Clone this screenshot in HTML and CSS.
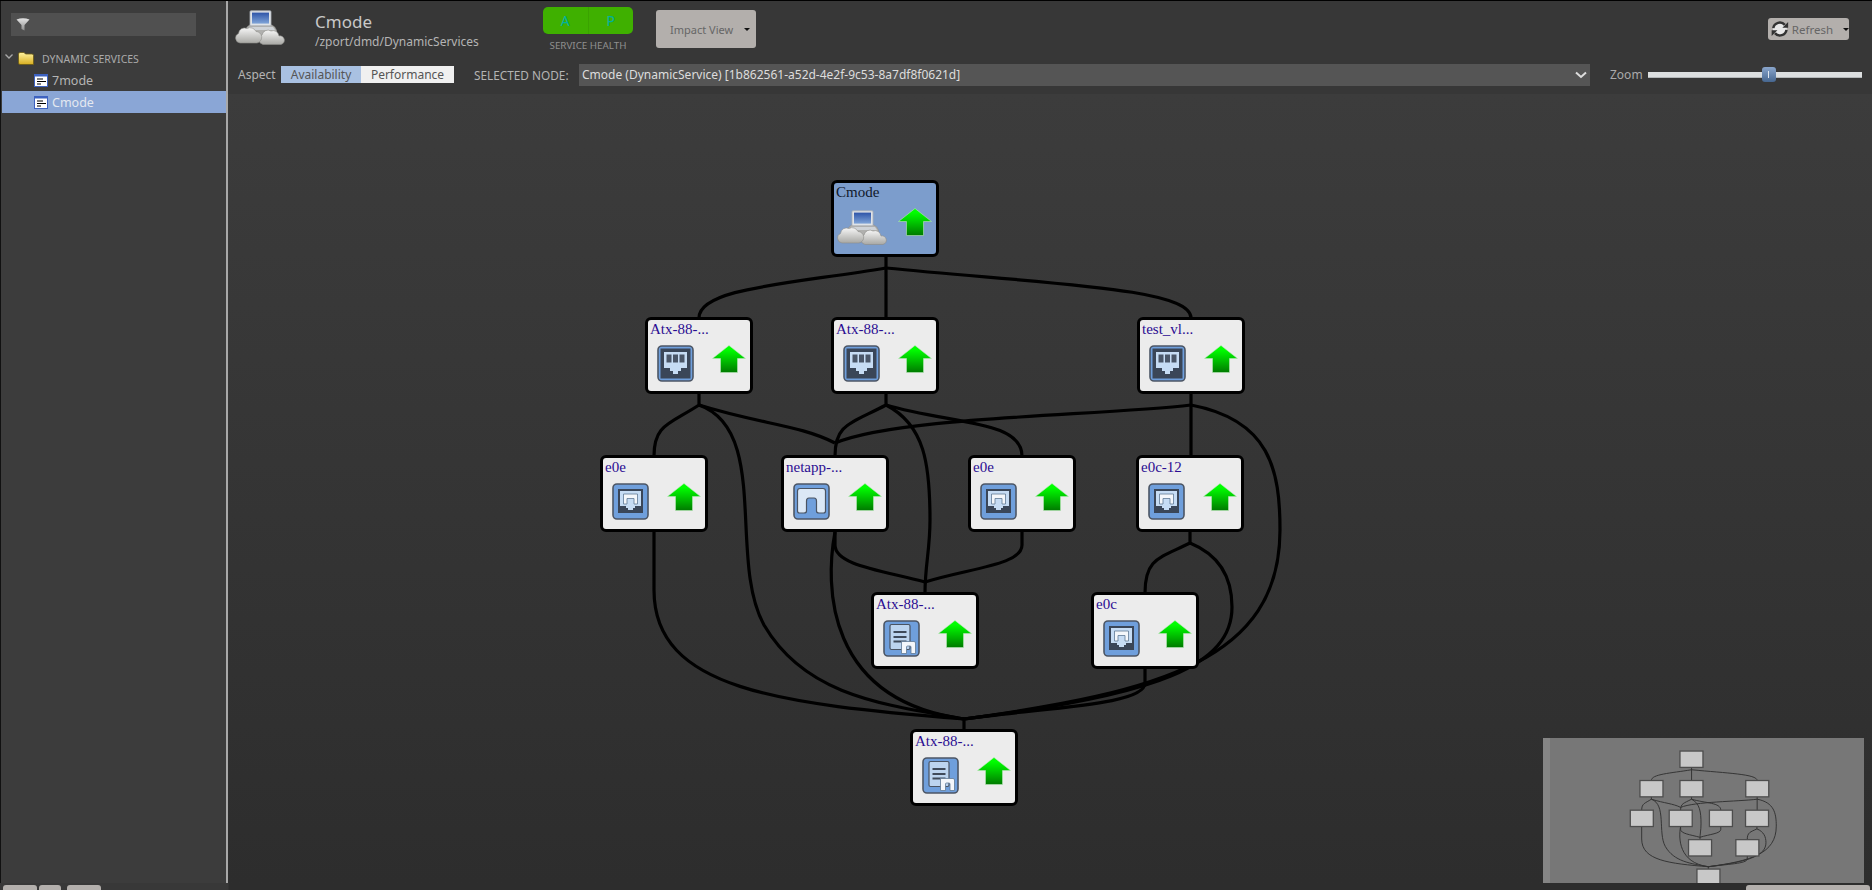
FILE: index.html
```html
<!DOCTYPE html>
<html lang="en">
<head>
  <meta charset="UTF-8">
  <title>Cmode - Dynamic Services</title>
  <link rel="stylesheet" href="styles.css">
</head>
<body>

  <!-- shared icons -->
  <svg class="defs" aria-hidden="true">
    <defs>
      <linearGradient id="g-arrow" x1="0" y1="0" x2="0" y2="1">
        <stop offset="0.15" stop-color="#00ff00"/>
        <stop offset="1" stop-color="#007a00"/>
      </linearGradient>
      <linearGradient id="g-screen" x1="0" y1="0" x2="0" y2="1">
        <stop offset="0" stop-color="#2f55a8"/>
        <stop offset="1" stop-color="#7fa4d8"/>
      </linearGradient>
      <linearGradient id="g-cloud" x1="0" y1="0" x2="0" y2="1">
        <stop offset="0" stop-color="#f6f6f6"/>
        <stop offset="1" stop-color="#a8a8a4"/>
      </linearGradient>
      <linearGradient id="g-folder" x1="0" y1="0" x2="0" y2="1">
        <stop offset="0" stop-color="#fff3a0"/>
        <stop offset="1" stop-color="#d8ae20"/>
      </linearGradient>
      <linearGradient id="g-funnel" x1="0" y1="0" x2="0" y2="1">
        <stop offset="0" stop-color="#e4e4e4"/>
        <stop offset="1" stop-color="#8c8c8c"/>
      </linearGradient>

      <symbol id="i-up" viewBox="0 0 34 28">
        <path d="M17 0.5 L33.5 13.5 H25.5 V27.5 H8.5 V13.5 H0.5 Z" fill="url(#g-arrow)" stroke="#b9e8b9" stroke-width="0.6"/>
      </symbol>

      <symbol id="i-cloud" viewBox="0 0 50 35">
        <path d="M10 24 q0-9 8-10 h15 q9 1 9 10 v6 H14 Z" fill="#b0b0ae" stroke="#8d8d8a" stroke-width="0.5"/>
        <rect x="15" y="0.8" width="21" height="15" rx="1" fill="#dfe3e8" stroke="#a9aeb6" stroke-width="0.8"/>
        <rect x="17" y="2.6" width="17" height="11" fill="url(#g-screen)"/>
        <path d="M14 17 h24 l2 3 H14 Z" fill="#cfd3d8"/>
        <g fill="url(#g-cloud)" stroke="#8d8d8a" stroke-width="0.6">
          <path d="M28 34.500 A5 5 0 0 1 27 25 A6 6 0 0 1 36 21 A6 6 0 0 1 44 26 A4.200 4.200 0 0 1 46 34.500 Z"/>
          <path d="M5 33 A5 5 0 0 1 3.500 23.500 A6 6 0 0 1 12 18.500 A6.500 6.500 0 0 1 21 21.500 A5.800 5.800 0 0 1 22 33 Z"/>
        </g>
      </symbol>

      <symbol id="i-port" viewBox="0 0 37 37">
        <rect x="1" y="1" width="35" height="35" rx="4" fill="#6f9fdc" stroke="#4c5665" stroke-width="1.600"/>
        <rect x="3.500" y="3.500" width="30" height="30" fill="#3a4658"/>
        <path d="M7 7 H30 V23 H24 V26 H21 V29 H16 V26 H13 V23 H7 Z" fill="#c6dcf4"/>
        <path d="M9.500 9.500 h5 v8 h-5 Z M16 9.500 h5 v8 h-5 Z M22.500 9.500 h5 v8 h-5 Z" fill="#4a5668"/>
      </symbol>

      <symbol id="i-iface" viewBox="0 0 37 37">
        <rect x="1" y="1" width="35" height="35" rx="4" fill="#6f9fdc" stroke="#4c5665" stroke-width="1.600"/>
        <rect x="6" y="6" width="25" height="24" fill="#3a4658"/>
        <path d="M8 8 H29 V23 H23 V25 H21 V27 H16 V25 H14 V23 H8 Z" fill="#c6dcf4"/>
        <path d="M11.500 11 H25.500 V21 H22 V15.500 H15 V21 H11.500 Z" fill="#f4f7fb" stroke="#5f7894" stroke-width="0.800"/>
      </symbol>

      <symbol id="i-netapp" viewBox="0 0 37 37">
        <rect x="1" y="1" width="35" height="35" rx="4" fill="#6f9fdc" stroke="#4c5665" stroke-width="1.600"/>
        <path d="M7 5.500 H30 Q32.500 5.500 32.500 8 V28 Q32.500 30 30.500 30 H26 Q23.500 30 23.500 28 V18 Q23.500 15 21 15 H16 Q13.500 15 13.500 18 V28 Q13.500 30 11 30 H6.500 Q4.500 30 4.500 28 V8 Q4.500 5.500 7 5.500 Z" fill="#dbe8f6" stroke="#4a5463" stroke-width="1.200"/>
      </symbol>

      <symbol id="i-lun" viewBox="0 0 37 37">
        <rect x="1" y="1" width="35" height="35" rx="4" fill="#6f9fdc" stroke="#4c5665" stroke-width="1.600"/>
        <rect x="7" y="4.500" width="20" height="25" rx="1.500" fill="#bcd4ef" stroke="#4a5463" stroke-width="1.200"/>
        <path d="M10.500 12 H23.500 M10.500 17 H23.500 M10.500 21.500 H23.500" stroke="#3f4a5a" stroke-width="1.800"/>
        <path d="M18.500 21.500 H31 Q32.500 21.500 32.500 23 V33.500 H28 V27 Q28 26 27 26 H24.500 Q23.500 26 23.500 27 V33.500 H18.500 Z" fill="#f4f7fb" stroke="#5f7894" stroke-width="0.800"/>
      </symbol>

      <symbol id="i-list" viewBox="0 0 14 13">
        <rect x="0.500" y="0.500" width="13" height="12" fill="#fff" stroke="#3d62c0"/>
        <rect x="0" y="0" width="14" height="2.500" fill="#3d62c0"/>
        <path d="M3 5 H9 M3 7.500 H12 M3 10 H7" stroke="#000" stroke-width="1.200"/>
      </symbol>

      <!-- graph edges, page coordinates. also drawn in the overview -->
      <g id="edges">
        <path d="M886 257 V318"/>
        <path d="M886 268 C790 284 699 288 699 318"/>
        <path d="M886 268 C1050 284 1191 288 1191 318"/>

        <path d="M699 394 V405 C670 424 654 424 654 456"/>
        <path d="M699 405 C760 424 800 425 835 443"/>
        <path d="M699 405 C770 430 728 560 764 625 C805 695 880 704 964 719"/>

        <path d="M886 394 V405 C850 424 835 424 835 456"/>
        <path d="M886 405 C950 424 1022 420 1022 456"/>
        <path d="M886 405 C925 425 930 465 930 520 C930 550 925 565 925 593"/>

        <path d="M1191 394 V456"/>
        <path d="M1191 405 C1100 416 900 416 835 443"/>
        <path d="M1191 405 C1270 420 1280 470 1280 530 C1280 660 1160 692 964 719"/>

        <path d="M654 532 V590 C654 690 780 704 964 719"/>
        <path d="M835 532 V545 C835 565 880 570 925 582"/>
        <path d="M835 532 C825 585 825 700 964 719"/>
        <path d="M1022 532 V545 C1022 565 970 568 925 582"/>
        <path d="M1190 532 V543 C1160 558 1145 558 1145 593"/>
        <path d="M1190 543 C1222 556 1232 580 1232 607 C1232 665 1160 695 964 719"/>
        <path d="M1145 668 V683 C1145 705 1050 707 964 719 V730"/>
      </g>
    </defs>
  </svg>

  <div class="app">

    <div class="sidebar">
      <div class="filter">
        <svg class="filter-icon" viewBox="0 0 14 13"><path d="M0.500 1.500 Q7 -1 13.500 1.500 L8.500 7 V12.500 L5.500 11 V7 Z" fill="url(#g-funnel)"/></svg>
      </div>
      <div class="tree-root">
        <svg class="tree-arrow" viewBox="0 0 8 5"><path d="M0.500 0.500 L4 4 L7.500 0.500" fill="none" stroke="#a8a8a8" stroke-width="1.400"/></svg>
        <svg class="folder" viewBox="0 0 16 13">
          <path d="M0.500 2 Q0.500 0.500 2 0.500 H6 L7.500 2 H14 Q15.500 2 15.500 3.500 V12.500 H2 Q0.500 12.500 0.500 11 Z" fill="url(#g-folder)" stroke="#6b5a14" stroke-width="0.800"/>
        </svg>
        <span>DYNAMIC SERVICES</span>
      </div>
      <div class="tree-row">
        <svg class="list-icon"><use href="#i-list"/></svg>
        <span>7mode</span>
      </div>
      <div class="tree-row selected">
        <svg class="list-icon"><use href="#i-list"/></svg>
        <span>Cmode</span>
      </div>
    </div>

    <div class="main">
      <div class="header">
        <div class="title-row">
          <svg class="header-icon"><use href="#i-cloud"/></svg>
          <div class="title-text">
            <div class="title">Cmode</div>
            <div class="path">/zport/dmd/DynamicServices</div>
          </div>
          <div class="health">
            <div class="health-btn">
              <span>A</span>
              <span>P</span>
            </div>
            <div class="health-label">SERVICE HEALTH</div>
          </div>
          <button class="grey-btn impact-btn">Impact View <i class="caret"></i></button>
          <button class="grey-btn refresh-btn">
            <svg class="refresh-icon" viewBox="0 0 24 24">
              <circle cx="12" cy="12" r="8.500" fill="#e8e8e8"/>
              <path d="M4 11 A8 8 0 0 1 18 7" fill="none" stroke="#333" stroke-width="3"/>
              <path d="M20 13 A8 8 0 0 1 6 17" fill="none" stroke="#333" stroke-width="3"/>
              <path d="M15 10.500 H22 V3.500 Z M9 13.500 H2 V20.500 Z" fill="#333"/>
            </svg>
            Refresh <i class="caret"></i>
          </button>
        </div>
        <div class="tool-row">
          <span class="aspect-label">Aspect</span>
          <div class="aspect-tabs">
            <span class="tab active">Availability</span>
            <span class="tab">Performance</span>
          </div>
          <span class="node-label">SELECTED NODE:</span>
          <div class="node-select">
            <span>Cmode (DynamicService) [1b862561-a52d-4e2f-9c53-8a7df8f0621d]</span>
            <svg class="select-arrow" viewBox="0 0 12 8"><path d="M1 1.500 L6 6 L11 1.500" fill="none" stroke="#ddd" stroke-width="2"/></svg>
          </div>
          <span class="zoom-label">Zoom</span>
          <div class="zoom-track">
            <div class="zoom-thumb"></div>
          </div>
        </div>
      </div>

      <div class="canvas">
        <svg class="edges" viewBox="228 94 1644 789"><use href="#edges"/></svg>

        <div class="node root n-cmode">
          <div class="node-name">Cmode</div>
          <svg class="node-cloud"><use href="#i-cloud"/></svg>
          <svg class="node-up"><use href="#i-up"/></svg>
        </div>

        <div class="node n-a1">
          <div class="node-name">Atx-88-...</div>
          <svg class="node-icon"><use href="#i-port"/></svg>
          <svg class="node-up"><use href="#i-up"/></svg>
        </div>
        <div class="node n-a2">
          <div class="node-name">Atx-88-...</div>
          <svg class="node-icon"><use href="#i-port"/></svg>
          <svg class="node-up"><use href="#i-up"/></svg>
        </div>
        <div class="node n-test">
          <div class="node-name">test_vl...</div>
          <svg class="node-icon"><use href="#i-port"/></svg>
          <svg class="node-up"><use href="#i-up"/></svg>
        </div>

        <div class="node n-e0e1">
          <div class="node-name">e0e</div>
          <svg class="node-icon"><use href="#i-iface"/></svg>
          <svg class="node-up"><use href="#i-up"/></svg>
        </div>
        <div class="node n-netapp">
          <div class="node-name">netapp-...</div>
          <svg class="node-icon"><use href="#i-netapp"/></svg>
          <svg class="node-up"><use href="#i-up"/></svg>
        </div>
        <div class="node n-e0e2">
          <div class="node-name">e0e</div>
          <svg class="node-icon"><use href="#i-iface"/></svg>
          <svg class="node-up"><use href="#i-up"/></svg>
        </div>
        <div class="node n-e0c12">
          <div class="node-name">e0c-12</div>
          <svg class="node-icon"><use href="#i-iface"/></svg>
          <svg class="node-up"><use href="#i-up"/></svg>
        </div>

        <div class="node n-lun1">
          <div class="node-name">Atx-88-...</div>
          <svg class="node-icon"><use href="#i-lun"/></svg>
          <svg class="node-up"><use href="#i-up"/></svg>
        </div>
        <div class="node n-e0c">
          <div class="node-name">e0c</div>
          <svg class="node-icon"><use href="#i-iface"/></svg>
          <svg class="node-up"><use href="#i-up"/></svg>
        </div>

        <div class="node n-lun2">
          <div class="node-name">Atx-88-...</div>
          <svg class="node-icon"><use href="#i-lun"/></svg>
          <svg class="node-up"><use href="#i-up"/></svg>
        </div>

        <!-- overview map -->
        <div class="overview">
          <svg class="overview-map" viewBox="195 120.500 1493 674">
            <use href="#edges"/>
            <g class="mini-nodes">
              <rect x="832" y="181" width="107" height="76"/>
              <rect x="646" y="318" width="107" height="76"/>
              <rect x="832" y="318" width="107" height="76"/>
              <rect x="1138" y="318" width="107" height="76"/>
              <rect x="601" y="456" width="107" height="76"/>
              <rect x="782" y="456" width="107" height="76"/>
              <rect x="969" y="456" width="107" height="76"/>
              <rect x="1137" y="456" width="107" height="76"/>
              <rect x="872" y="593" width="107" height="76"/>
              <rect x="1092" y="593" width="107" height="76"/>
              <rect x="911" y="730" width="107" height="76"/>
            </g>
          </svg>
        </div>
      </div>
    </div>
  </div>

  <div class="statusbar">
    <div class="status-btn sb-1"></div>
    <div class="status-btn sb-2"></div>
    <div class="status-btn sb-3"></div>
    <div class="status-btn sb-4"></div>
  </div>

</body>
</html>
```

FILE: styles.css
```css
* {
  margin: 0;
  padding: 0;
  box-sizing: border-box;
}

body {
  width: 1872px;
  height: 890px;
  overflow: hidden;
  background-color: #2f2f2f;
  font-family: "Noto Sans", Arial, sans-serif;
  color: #bbb;
}

.defs {
  position: absolute;
  width: 0;
  height: 0;
}

.app {
  display: flex;
  height: 883px;
  border-top: 1px solid #000;
}

/* left tree */
.sidebar {
  width: 228px;
  flex-shrink: 0;
  padding-top: 12px;
  padding-left: 1px;
  background-color: #3c3c3c;
  border-left: 1px solid #111;
  border-right: 2px solid #a8a8a8;
}

.filter {
  width: 185px;
  height: 23px;
  margin-left: 9px;
  padding: 5px 5px;
  background-color: #505050;
}

.filter-icon {
  display: block;
  width: 14px;
  height: 13px;
}

.tree-root {
  display: flex;
  align-items: center;
  height: 21px;
  margin-top: 12px;
  padding-left: 3px;
  font-size: 10.500px;
  color: #aaa;
}

.tree-arrow {
  width: 8px;
  height: 5px;
  margin-right: 5px;
  margin-top: -5px;
}

.folder {
  width: 16px;
  height: 13px;
  margin-right: 8px;
}

.tree-row {
  display: flex;
  align-items: center;
  gap: 4px;
  height: 22px;
  padding-left: 32px;
  font-size: 12.500px;
  color: #b4b4b4;
}

.tree-row.selected {
  background-color: #8aa6d6;
  color: #e4e8f0;
}

.list-icon {
  width: 14px;
  height: 13px;
}

/* header */
.main {
  flex: 1;
  display: flex;
  flex-direction: column;
  min-width: 0;
}

.header {
  height: 93px;
  background-color: #373737;
  padding-left: 7px;
}

.title-row {
  display: flex;
  align-items: flex-start;
  height: 62px;
}

.header-icon {
  width: 50px;
  height: 35px;
  margin-top: 9px;
  flex-shrink: 0;
}

.title-text {
  width: 228px;
  margin-left: 30px;
  padding-top: 9px;
}

.title {
  font-size: 17px;
  line-height: 24px;
  color: #c8c8c8;
}

.path {
  font-size: 12px;
  line-height: 15px;
  color: #b4b4b4;
}

.health {
  width: 90px;
  padding-top: 6px;
}

.health-btn {
  display: flex;
  height: 27px;
  background-color: #3fb000;
  border-radius: 5px;
  color: #00b0a0;
  font-size: 14px;
  line-height: 27px;
  text-align: center;
}

.health-btn span {
  flex: 1;
}

.health-btn span:first-child {
  border-right: 1px solid #3aa300;
}

.health-label {
  margin-top: 5px;
  font-size: 9.800px;
  line-height: 14px;
  text-align: center;
  white-space: nowrap;
  color: #8f8f8f;
}

.grey-btn {
  display: flex;
  align-items: center;
  background-color: #b3afac;
  border: none;
  border-radius: 3px;
  font-family: "Noto Sans", Arial, sans-serif;
  font-size: 11.500px;
  color: #666;
}

.impact-btn {
  width: 100px;
  height: 38px;
  margin-top: 9px;
  margin-left: 23px;
  padding-left: 14px;
  font-size: 11px;
}

.refresh-btn {
  width: 81px;
  height: 22px;
  margin-top: 17px;
  margin-left: auto;
  margin-right: 23px;
  padding-left: 2px;
  gap: 2px;
  white-space: nowrap;
}

.refresh-icon {
  width: 20px;
  height: 20px;
}

.caret {
  display: inline-block;
  width: 0;
  height: 0;
  margin-left: 8px;
  border-left: 3px solid transparent;
  border-right: 3px solid transparent;
  border-top: 3px solid #111;
}

.impact-btn .caret {
  margin-left: 11px;
}

.tool-row {
  display: flex;
  align-items: center;
  height: 23px;
  padding-left: 3px;
  font-size: 12px;
}

.aspect-label {
  width: 43px;
  color: #b4b4b4;
}

.aspect-tabs {
  display: flex;
  width: 173px;
  height: 17px;
  line-height: 17px;
  font-size: 12px;
  text-align: center;
  color: #555;
}

.tab {
  flex: 1;
  background-color: #f0f0f0;
}

.tab.active {
  flex: 0 0 80px;
  background-color: #a9c1e2;
}

.node-label {
  width: 105px;
  margin-left: 20px;
  font-size: 11.800px;
  white-space: nowrap;
  color: #b4b4b4;
}

.node-select {
  display: flex;
  align-items: center;
  justify-content: space-between;
  width: 1011px;
  height: 22px;
  padding: 0 3px;
  background-color: #555;
  font-size: 12px;
  color: #ddd;
}

.select-arrow {
  width: 12px;
  height: 8px;
}

.zoom-label {
  margin-left: 20px;
  width: 38px;
  color: #aaa;
}

.zoom-track {
  position: relative;
  width: 214px;
  height: 6px;
  background-color: #dcdfe0;
  border-bottom: 1px solid #b4b8ba;
}

.zoom-thumb {
  position: absolute;
  left: 114px;
  top: -5px;
  width: 14px;
  height: 15px;
  border-radius: 3px;
  background-image: linear-gradient(#8aa6cc, #46668f);
}

.zoom-thumb::after {
  content: "";
  position: absolute;
  left: 6px;
  top: 4px;
  width: 1px;
  height: 7px;
  background-color: #dfe6ee;
}

/* graph canvas */
.canvas {
  position: relative;
  flex: 1;
  background-image: linear-gradient(180deg, #3c3c3c, #2d2d2d);
}

.edges {
  position: absolute;
  left: 0;
  top: 0;
  width: 1644px;
  height: 789px;
  fill: none;
  stroke: #000;
  stroke-width: 3.200px;
}

.node {
  position: absolute;
  width: 108px;
  height: 77px;
  background-color: #ececec;
  border: 3px solid #000;
  border-radius: 6px;
}

.node.root {
  background-color: #7c9dcc;
}

.node-name {
  position: absolute;
  left: 2px;
  top: 0;
  font-family: "Liberation Serif", "Times New Roman", serif;
  font-size: 15px;
  line-height: 18px;
  color: #2b0c92;
}

.root .node-name {
  color: #10182a;
}

.node-icon {
  position: absolute;
  left: 9px;
  top: 25px;
  width: 37px;
  height: 37px;
}

.node-cloud {
  position: absolute;
  left: 3px;
  top: 27px;
  width: 50px;
  height: 35px;
}

.node-up {
  position: absolute;
  left: 64px;
  top: 25px;
  width: 34px;
  height: 28px;
}

.n-cmode { left: 603px; top: 86px; }
.n-a1 { left: 417px; top: 223px; }
.n-a2 { left: 603px; top: 223px; }
.n-test { left: 909px; top: 223px; }
.n-e0e1 { left: 372px; top: 361px; }
.n-netapp { left: 553px; top: 361px; }
.n-e0e2 { left: 740px; top: 361px; }
.n-e0c12 { left: 908px; top: 361px; }
.n-lun1 { left: 643px; top: 498px; }
.n-e0c { left: 863px; top: 498px; }
.n-lun2 { left: 682px; top: 635px; }

/* overview */
.overview {
  position: absolute;
  right: 8px;
  bottom: 0;
  width: 321px;
  height: 145px;
  background-color: #777;
  border-left: 7px solid #858585;
}

.overview-map {
  position: absolute;
  left: -7px;
  top: 0;
  width: 321px;
  height: 145px;
  fill: none;
  stroke: #333;
  stroke-width: 4.500px;
}

.mini-nodes rect {
  fill: #c8c8c8;
  stroke: #4d4d4d;
  stroke-width: 6px;
}

/* mostly cut off by the window */
.statusbar {
  position: relative;
  height: 7px;
  overflow: hidden;
  background-image: linear-gradient(90deg, #383838 228px, #2d2d2d 229px);
}

.status-btn {
  position: absolute;
  top: 2px;
  height: 20px;
  background-color: #b3afac;
  border-radius: 3px;
}

.sb-1 { left: 3px; width: 34px; }
.sb-2 { left: 39px; width: 22px; }
.sb-3 { left: 67px; width: 34px; }
.sb-4 { left: 1746px; width: 124px; }
```
